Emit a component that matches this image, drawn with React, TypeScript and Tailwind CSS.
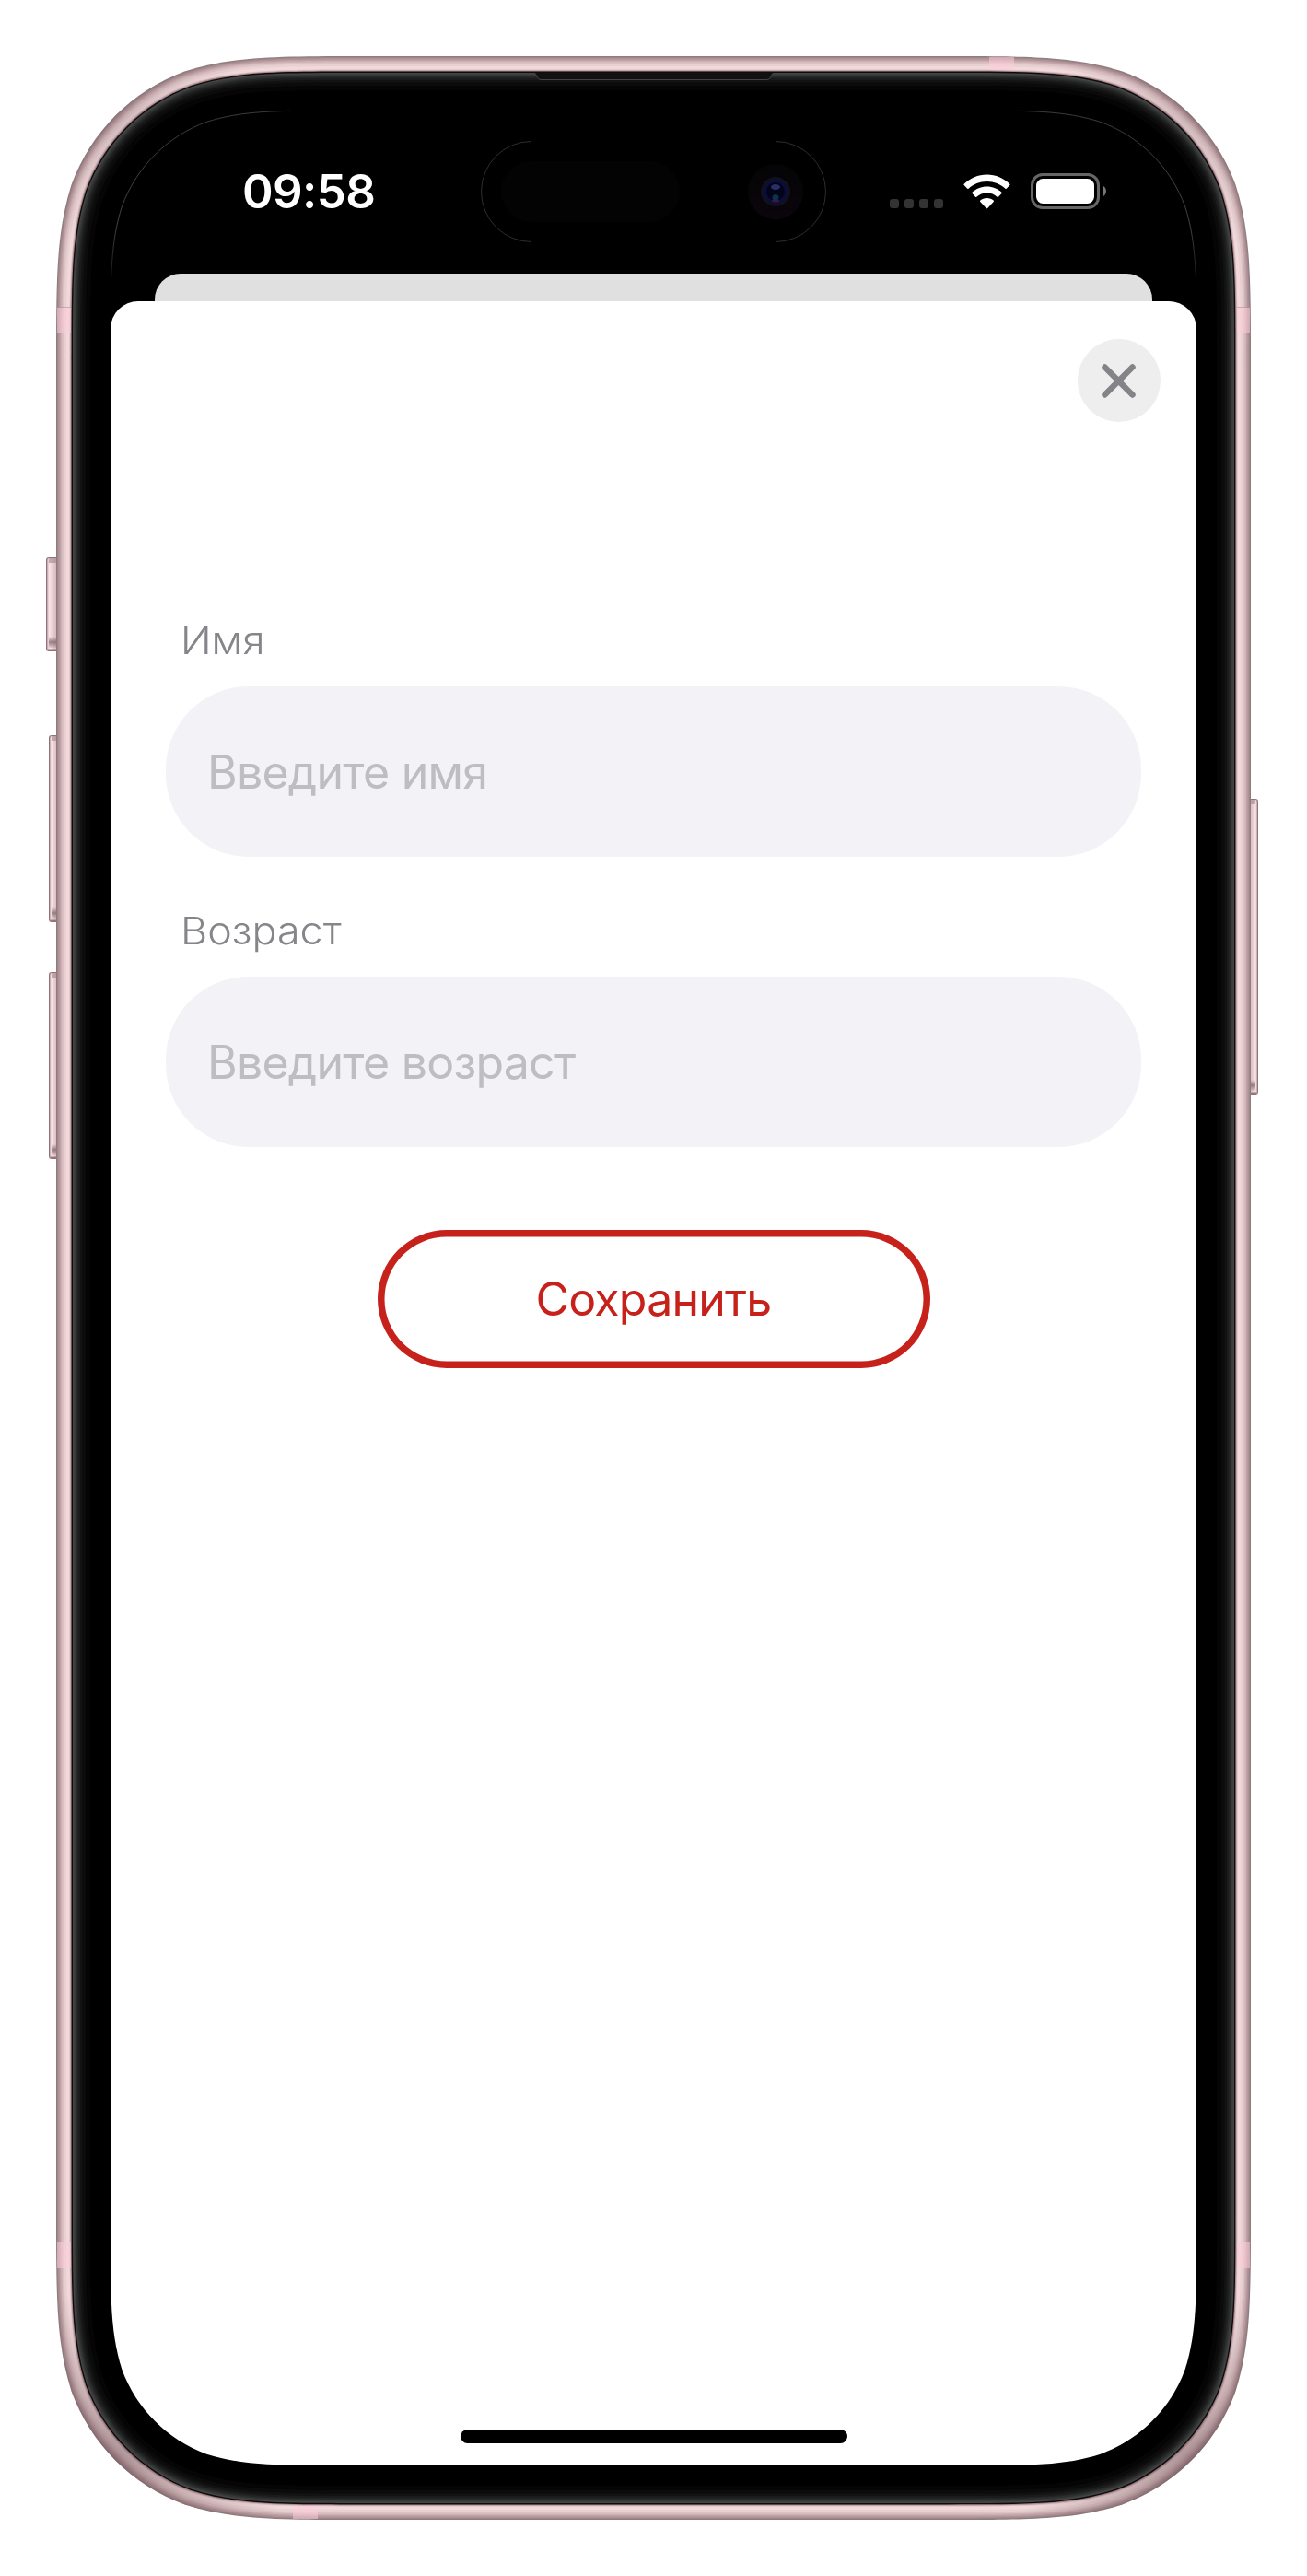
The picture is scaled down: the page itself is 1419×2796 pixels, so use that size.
import React from "react";

// Rounded rectangle with continuous (squircle-like) corners.
function smoothRect(x: number, y: number, w: number, h: number, r: number) {
  const a = 1.528665 * r, b = 1.08849 * r, c = 0.868407 * r, d = 0.631494 * r;
  const e = 0.0749114 * r, f = 0.372824 * r, g = 0.16906 * r;
  const X = x + w, Y = y + h;
  return [
    `M${x + a} ${y}H${X - a}`,
    `C${X - b} ${y} ${X - c} ${y} ${X - d} ${y + e}`,
    `C${X - f} ${y + g} ${X - g} ${y + f} ${X - e} ${y + d}`,
    `C${X} ${y + c} ${X} ${y + b} ${X} ${y + a}V${Y - a}`,
    `C${X} ${Y - b} ${X} ${Y - c} ${X - e} ${Y - d}`,
    `C${X - g} ${Y - f} ${X - f} ${Y - g} ${X - d} ${Y - e}`,
    `C${X - c} ${Y} ${X - b} ${Y} ${X - a} ${Y}H${x + a}`,
    `C${x + b} ${Y} ${x + c} ${Y} ${x + d} ${Y - e}`,
    `C${x + f} ${Y - g} ${x + g} ${Y - f} ${x + e} ${Y - d}`,
    `C${x} ${Y - c} ${x} ${Y - b} ${x} ${Y - a}V${y + a}`,
    `C${x} ${y + b} ${x} ${y + c} ${x + e} ${y + d}`,
    `C${x + g} ${y + f} ${x + f} ${y + g} ${x + d} ${y + e}`,
    `C${x + c} ${y} ${x + b} ${y} ${x + a} ${y}Z`,
  ].join("");
}

const OUTER = smoothRect(61, 61, 1297, 2674, 221);
const SCREEN = smoothRect(120, 120, 1179, 2556, 165);

const METAL = [
  { i: 0, c: "#8f7c7f" },
  { i: 1, c: "#9f878b" },
  { i: 2, c: "#ad9296" },
  { i: 3.5, c: "#bfa2a6" },
  { i: 5, c: "#ceb2b6" },
  { i: 6.5, c: "#dcc2c5" },
  { i: 8.5, c: "#e8d0d2" },
  { i: 11, c: "#efd9db" },
  { i: 14.5, c: "#dcbcc1" },
  { i: 15.5, c: "#ab888e" },
];

const BEZEL = [
  { i: 16.6, c: "#0c0c0c" },
  { i: 18, c: "#434444" },
  { i: 19.5, c: "#383939" },
  { i: 21, c: "#2d2e2e" },
  { i: 22.5, c: "#232424" },
  { i: 24, c: "#1a1b1b" },
  { i: 26, c: "#121212" },
  { i: 28.5, c: "#0b0b0b" },
  { i: 32, c: "#050505" },
  { i: 37, c: "#000000" },
];

function Layer({ i, c }: { i: number; c: string }) {
  return <path d={smoothRect(61 + i, 61 + i, 1297 - 2 * i, 2674 - 2 * i, 221 - i * 0.95)} fill={c} />;
}

function SideButton({ x, y, w, h, flip }: { x: number; y: number; w: number; h: number; flip?: boolean }) {
  return (
    <g transform={flip ? `translate(${2 * x + w} 0) scale(-1 1)` : undefined}>
      <rect x={x} y={y} width={w + 5} height={h} rx="3" fill="#8f7378" />
      <rect x={x + 1} y={y + 1} width={w + 4} height={h - 2} rx="2" fill="url(#key)" />
      <rect x={x + 3} y={y + 1} width={w - 3} height="5" fill="#a98389" opacity=".6" />
      <rect x={x + 3} y={y + h - 16} width={w - 3} height="12" fill="url(#keyShade)" />
      <rect x={x + 2} y={y + h - 2.5} width={w - 2} height="1.5" fill="#9b777d" />
    </g>
  );
}

function DeviceFrame() {
  return (
    <svg className="pointer-events-none absolute inset-0" width="1419" height="2796" viewBox="0 0 1419 2796" aria-hidden="true">
      <defs>
        <linearGradient id="key" x1="0" x2="1">
          <stop offset="0" stopColor="#c09da3" />
          <stop offset=".15" stopColor="#f9e6e8" />
          <stop offset=".4" stopColor="#e8cdd1" />
          <stop offset="1" stopColor="#c5a5aa" />
        </linearGradient>
        <linearGradient id="keyShade" x1="0" x2="0" y1="0" y2="1">
          <stop offset="0" stopColor="#7d6066" stopOpacity="0" />
          <stop offset=".5" stopColor="#7d6066" stopOpacity=".75" />
          <stop offset="1" stopColor="#7d6066" stopOpacity="0.1" />
        </linearGradient>
        <linearGradient id="arc" x1="0" x2="0" y1="120" y2="330" gradientUnits="userSpaceOnUse">
          <stop offset="0" stopColor="#3a3a3a" />
          <stop offset=".6" stopColor="#444" />
          <stop offset="1" stopColor="#444" stopOpacity="0" />
        </linearGradient>
        <radialGradient id="corner">
          <stop offset="0" stopColor="#6b4f54" stopOpacity=".5" />
          <stop offset="1" stopColor="#6b4f54" stopOpacity="0" />
        </radialGradient>
        <mask id="ring">
          <rect width="1419" height="2796" fill="#fff" />
          <path d={SCREEN} fill="#000" />
        </mask>
        <clipPath id="body"><path d={OUTER} /></clipPath>
        <clipPath id="topCorners">
          <rect x="110" y="110" width="205" height="190" />
          <rect x="1104" y="110" width="205" height="190" />
        </clipPath>
      </defs>
      <SideButton x={50} y={605} w={11} h={102} />
      <SideButton x={53} y={798} w={8} h={203} />
      <SideButton x={53} y={1055} w={8} h={203} />
      <SideButton x={1358} y={867} w={8} h={321} flip />
      <g mask="url(#ring)">
        {METAL.map((m) => <Layer key={m.i} {...m} />)}
        <g clipPath="url(#body)">
          <g fill="url(#corner)">
            <circle cx="122" cy="2674" r="190" />
            <circle cx="1297" cy="2674" r="190" />
            <circle cx="122" cy="122" r="150" opacity=".45" />
            <circle cx="1297" cy="122" r="150" opacity=".45" />
          </g>
          <g fill="#fdccd8" opacity=".55">
            <rect x="62" y="334" width="15" height="27" />
            <rect x="1343" y="334" width="14" height="27" />
            <rect x="62" y="2434" width="15" height="28" />
            <rect x="1343" y="2434" width="14" height="28" />
            <rect x="1074" y="62" width="27" height="14" />
            <rect x="318" y="2720" width="27" height="14" />
          </g>
          <g fill="#b08e94" opacity=".6">
            <rect x="62" y="333" width="15" height="1" />
            <rect x="1343" y="333" width="14" height="1" />
            <rect x="62" y="2433" width="15" height="1" />
            <rect x="1343" y="2433" width="14" height="1" />
          </g>
        </g>
        {BEZEL.map((m) => <Layer key={m.i} {...m} />)}
        <path d="M580 79c3 0 2 7 8 7H832c6 0 5-7 8-7Z" fill="#111" />
        <path d="M580 79.500c3 0 2 7 8 7H832c6 0 5-7 8-7" fill="none" stroke="#444" />
      </g>
      <path d={SCREEN} fill="none" stroke="url(#arc)" clipPath="url(#topCorners)" />
    </svg>
  );
}

function Island() {
  return (
    <svg className="h-[110px] w-[375px]" viewBox="0 0 375 110" fill="none" aria-hidden="true">
      <defs>
        <linearGradient id="lens" x1="0" x2="0" y1="0" y2="1">
          <stop offset="0" stopColor="#040405" />
          <stop offset="1" stopColor="#0b050c" />
        </linearGradient>
      </defs>
      <path d="M55 .5A54.500 54.500 0 0 0 55 109.500M320 .5A54.500 54.500 0 0 1 320 109.500" stroke="#3a3a3a" strokeWidth=".8" />
      <rect x="22" y="22" width="194" height="66" rx="33" fill="#030303" />
      <circle cx="320" cy="55" r="30" fill="url(#lens)" />
      <circle cx="320" cy="55" r="16" fill="#10101f" />
      <circle cx="320" cy="55" r="11" fill="#03041a" stroke="#090d42" strokeWidth="2" />
      <ellipse cx="320" cy="50" rx="5" ry="3" fill="#2b2f68" />
      <circle cx="320" cy="61.500" r="3.500" fill="#0a3348" />
      <ellipse cx="320" cy="65" rx="4" ry="1.500" fill="#3c1258" />
    </svg>
  );
}

function StatusBar() {
  return (
    <div className="flex h-[177px] items-start justify-between">
      <div className="ml-[143px] mt-[58px] text-[51px] leading-[60px] font-semibold tracking-[-0.6px] text-white">09:58</div>
      <div className="mr-[97px] mt-[67px] flex items-start">
        <div className="mt-[29px] flex gap-[6px]">
          {[0, 1, 2, 3].map((n) => (
            <span key={n} className="size-[10px] rounded-[3px] bg-[#333333]" />
          ))}
        </div>
        <svg className="ml-[22px] mt-[2px] h-[38px] w-[51px]" viewBox="0 0 51 38" fill="#fff" aria-hidden="true">
          <path d="M25.500 7.900C33.300 7.900 40.300 10.900 45.500 15.700Q46.100 16.200 46.700 15.700L50.300 12Q51 11.400 50.300 10.700C43.800 4.500 35 .5 25.500 .5C16 .5 7.200 4.500.7 10.700Q0 11.400.7 12L4.300 15.700Q4.900 16.200 5.500 15.700C10.700 10.900 17.700 7.900 25.500 7.900Z" />
          <path d="M25.500 20.500C29.900 20.500 33.700 22.100 36.700 24.700Q37.300 25.200 37.900 24.700L41.500 21Q42.200 20.400 41.500 19.700C37.300 15.900 31.700 13.500 25.500 13.500C19.300 13.500 13.700 15.900 9.500 19.700Q8.800 20.400 9.500 21L13.100 24.700Q13.700 25.200 14.300 24.700C17.300 22.100 21.100 20.500 25.500 20.500Z" />
          <path d="M32.700 28.600Q33.400 29.200 32.700 29.900L26.200 36.900Q25.500 37.600 24.800 36.900L18.300 29.900Q17.600 29.200 18.300 28.600C20.200 27 22.700 26 25.500 26C28.300 26 30.800 27 32.700 28.600Z" />
        </svg>
        <svg className="ml-[22px] mt-px h-[39px] w-[83px]" viewBox="0 0 83 39" aria-hidden="true">
          <rect x="1.500" y="1.500" width="72" height="36" rx="11.500" fill="none" stroke="#666" strokeWidth="3" />
          <rect x="6" y="6" width="63" height="27" rx="7.500" fill="#fff" />
          <path d="M78 13.500C80.600 14.500 82 17 82 19.500S80.600 24.500 78 25.500Z" fill="#777" />
        </svg>
      </div>
    </div>
  );
}

function Field({ label, placeholder, top, stretch }: { label: string; placeholder: string; top: string; stretch: string }) {
  return (
    <label className={`flex flex-col ${top}`}>
      <span className={`ml-[16px] w-fit origin-left text-[41px] leading-[50px] font-light text-[#85858a] ${stretch}`}>{label}</span>
      <input
        className="mt-[25px] h-[185px] w-[1059px] rounded-[90px] bg-[#f2f2f7] px-[45px] text-[50px] tracking-[-0.75px] text-[#1c1c1e] outline-none placeholder:text-[#bdbdc2]"
        placeholder={placeholder}
      />
    </label>
  );
}

export default function App() {
  return (
    <div className="relative flex h-[2796px] w-[1419px] flex-col bg-white px-[120px] py-[120px] font-[Inter,sans-serif]">
      <div className="relative flex h-[2556px] w-[1179px] flex-col rounded-t-[150px] rounded-b-[120px] bg-black">
        <div className="absolute left-[402px] top-[33px]"><Island /></div>
        <StatusBar />
        <div className="mx-auto h-[30px] w-[1083px] rounded-t-[28px] bg-[#e0e0e0]" />
        <main className="flex flex-1 flex-col items-center rounded-t-[30px] rounded-b-[120px] bg-white">
          <button className="mr-[39px] mt-[41px] flex size-[90px] items-center justify-center self-end rounded-full bg-[#eeeeee]" aria-label="Закрыть">
            <svg className="size-[38px]" viewBox="0 0 38 38" stroke="#848488" strokeWidth="6.500" strokeLinecap="round" aria-hidden="true">
              <path d="M3.500 4.500L33.500 34.500M33.500 4.500L3.500 34.500" />
            </svg>
          </button>
          <Field label="Имя" placeholder="Введите имя" top="mt-[212px]" stretch="scale-x-[1.08]" />
          <Field label="Возраст" placeholder="Введите возраст" top="mt-[55px]" stretch="scale-x-[1.095]" />
          <button className="mt-[90px] flex h-[150px] w-[600px] items-center justify-center rounded-full text-[50px] tracking-[-0.8px] text-[#c6221b] shadow-[inset_0_0_0_7.5px_#c6221b]">
            Сохранить
          </button>
          <div className="mb-[24px] mt-auto h-[15px] w-[420px] rounded-full bg-black" />
        </main>
      </div>
      <DeviceFrame />
    </div>
  );
}
